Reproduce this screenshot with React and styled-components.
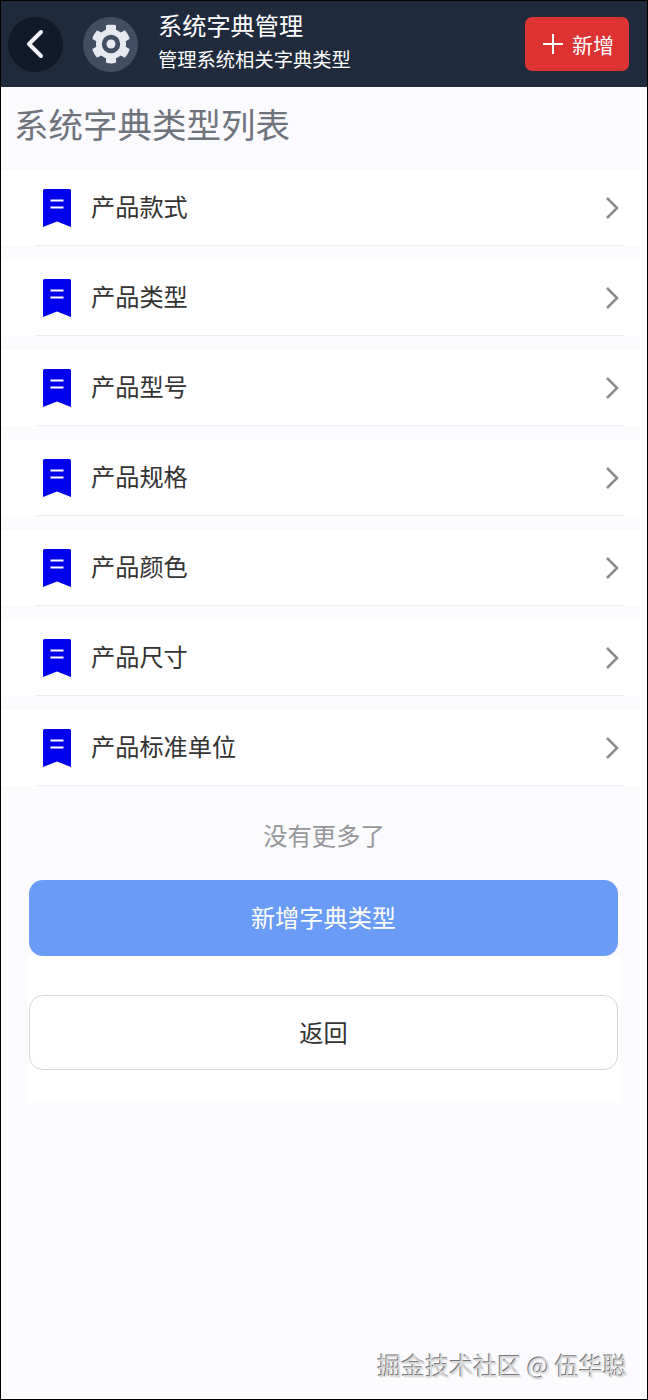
import styled, { createGlobalStyle } from "styled-components";

const TYPES = [
  "产品款式",
  "产品类型",
  "产品型号",
  "产品规格",
  "产品颜色",
  "产品尺寸",
  "产品标准单位",
];

const GlobalStyle = createGlobalStyle`
  * { box-sizing: border-box; }
  html, body { margin: 0; padding: 0; }
  body {
    font-family: "Noto Sans CJK SC", "Noto Sans", sans-serif;
    background: #fbfbfe;
  }
`;

const BookmarkIcon = () => (
  <svg width="28" height="38" viewBox="0 0 28 38">
    <path d="M1.500 0h25A1.500 1.500 0 0 1 28 1.500V38L14 32.500 0 38V1.500A1.500 1.500 0 0 1 1.500 0z" fill="#0000ee" />
    <path d="M7.500 11.500h13M7.500 18.500h13" stroke="#fff" strokeWidth="2.200" />
  </svg>
);

const Chevron = () => (
  <svg width="14" height="24" viewBox="0 0 14 24" fill="none">
    <path d="M2 2l10 10L2 22" stroke="#8c8c8c" strokeWidth="2.600" />
  </svg>
);

const BackIcon = () => (
  <svg width="20" height="30" viewBox="0 0 20 30" fill="none">
    <path d="M16 3L4 15l12 12" stroke="#f1f3f6" strokeWidth="4" strokeLinecap="round" strokeLinejoin="round" />
  </svg>
);

const GearIcon = () => (
  <svg width="40" height="40" viewBox="0 0 512 512">
    <path
      fill="#e6eaf0"
      d="M487.400 315.700l-42.600-24.600c4.300-23.200 4.300-47 0-70.200l42.600-24.600c4.900-2.800 7.100-8.600 5.500-14-11.100-35.600-30-67.800-54.700-94.600-3.800-4.100-10-5.100-14.800-2.300L380.800 110c-17.900-15.400-38.500-27.300-60.800-35.100V25.800c0-5.600-3.900-10.500-9.400-11.700-36.700-8.200-74.300-7.800-109.200 0-5.500 1.200-9.400 6.100-9.400 11.700V75c-22.200 7.900-42.800 19.800-60.800 35.100L88.700 85.500c-4.900-2.800-11-1.900-14.800 2.300-24.700 26.700-43.600 58.900-54.700 94.600-1.700 5.400.6 11.200 5.500 14L67.300 221c-4.300 23.200-4.300 47 0 70.200l-42.600 24.600c-4.900 2.800-7.100 8.600-5.500 14 11.100 35.600 30 67.800 54.700 94.600 3.800 4.100 10 5.100 14.800 2.300l42.600-24.600c17.900 15.400 38.500 27.300 60.800 35.100v49.200c0 5.600 3.900 10.500 9.400 11.700 36.700 8.200 74.300 7.800 109.200 0 5.500-1.200 9.400-6.100 9.400-11.700v-49.200c22.200-7.900 42.800-19.800 60.800-35.100l42.600 24.600c4.900 2.800 11 1.900 14.800-2.300 24.700-26.700 43.600-58.900 54.700-94.600 1.500-5.500-.7-11.300-5.600-14.100z"
    />
    <circle cx="256" cy="256" r="118" fill="#414e63" />
    <circle cx="256" cy="256" r="58" fill="#e6eaf0" />
  </svg>
);

const App = () => (
  <Page>
    <GlobalStyle />
    <Header>
      <BackButton>
        <BackIcon />
      </BackButton>
      <GearBadge>
        <GearIcon />
      </GearBadge>
      <HeaderText>
        <HeaderTitle>系统字典管理</HeaderTitle>
        <HeaderSub>管理系统相关字典类型</HeaderSub>
      </HeaderText>
      <AddButton>
        <PlusMark />
        新增
      </AddButton>
    </Header>

    <SectionTitle>系统字典类型列表</SectionTitle>

    <TypeList>
      {TYPES.map((name) => (
        <TypeRow key={name}>
          <BookmarkIcon />
          <TypeName>{name}</TypeName>
          <Chevron />
        </TypeRow>
      ))}
    </TypeList>

    <NoMore>没有更多了</NoMore>

    <Actions>
      <WideButton $primary>新增字典类型</WideButton>
      <WideButton>返回</WideButton>
    </Actions>

    <Watermark>掘金技术社区 @ 伍华聪</Watermark>
  </Page>
);

export default App;

const Page = styled.div`
  position: relative;
  width: 648px;
  height: 1400px;
  border: 1px solid #000;
  background: #fbfbfe;
  overflow: hidden;
`;
const Header = styled.header`
  display: flex;
  align-items: center;
  height: 86px;
  padding: 0 18px 0 7px;
  background: #1f2a3d;
`;
const BackButton = styled.div`
  display: flex;
  align-items: center;
  justify-content: center;
  width: 55px;
  height: 55px;
  padding-right: 2px;
  border-radius: 50%;
  background: #111a2a;
`;
const GearBadge = styled.div`
  display: flex;
  align-items: center;
  justify-content: center;
  width: 55px;
  height: 55px;
  margin-left: 20px;
  border-radius: 50%;
  background: #414e63;
`;
const HeaderText = styled.div`
  flex: 1;
  margin-left: 20px;
  margin-top: -4px;
  color: #fff;
`;
const HeaderTitle = styled.div`
  font-size: 24.200px;
  line-height: 34px;
`;
const HeaderSub = styled.div`
  font-size: 19.300px;
  line-height: 35px;
`;
const AddButton = styled.div`
  display: flex;
  align-items: center;
  justify-content: center;
  gap: 9px;
  width: 104px;
  height: 54px;
  padding-left: 3px;
  border-radius: 7px;
  background: #dc3232;
  color: #fff;
  font-size: 21px;
`;
const PlusMark = styled.span`
  width: 20px;
  height: 20px;
  background:
    linear-gradient(#fff, #fff) center / 100% 2px no-repeat,
    linear-gradient(#fff, #fff) center / 2px 100% no-repeat;
`;
const SectionTitle = styled.h2`
  height: 83px;
  margin: 0;
  padding-left: 13px;
  font-size: 34.500px;
  font-weight: 400;
  line-height: 73px;
  color: #6e737c;
`;
const TypeList = styled.div`
  display: flex;
  flex-direction: column;
  gap: 14px;
  margin-right: 6px;
`;
const TypeRow = styled.div`
  position: relative;
  display: flex;
  align-items: center;
  gap: 20px;
  height: 76px;
  padding: 0 22px 0 42px;
  background: #fff;

  &::after {
    content: "";
    position: absolute;
    left: 35px;
    right: 17px;
    bottom: 0;
    height: 1px;
    background: #eceef2;
  }
`;
const TypeName = styled.span`
  flex: 1;
  margin-bottom: 5px;
  font-size: 24.200px;
  color: #333;
`;
const NoMore = styled.div`
  margin-top: 32px;
  height: 34px;
  font-size: 24.300px;
  line-height: 34px;
  text-align: center;
  color: #969799;
`;
const Actions = styled.div`
  display: flex;
  flex-direction: column;
  gap: 39px;
  width: 592px;
  margin: 28px 0 0 27px;
  padding: 0 1px 33px;
  background: linear-gradient(#fbfbfe 76px, #fff 76px);
`;
const WideButton = styled.div`
  display: flex;
  align-items: center;
  justify-content: center;
  width: 589px;
  height: ${(props) => (props.$primary ? "76px" : "75px")};
  padding-bottom: 3px;
  border: ${(props) => (props.$primary ? "none" : "1px solid #d6d6da")};
  border-radius: 14px;
  background: ${(props) => (props.$primary ? "#6a9bf6" : "#fff")};
  color: ${(props) => (props.$primary ? "#fff" : "#333")};
  font-size: 24.200px;
`;
const Watermark = styled.div`
  position: absolute;
  right: 20px;
  bottom: 18px;
  font-size: 24px;
  line-height: 32px;
  color: #d8d8d8;
  text-shadow: -1px -1px 0 #777, 1px 1px 0 #eee;
  white-space: nowrap;
`;
